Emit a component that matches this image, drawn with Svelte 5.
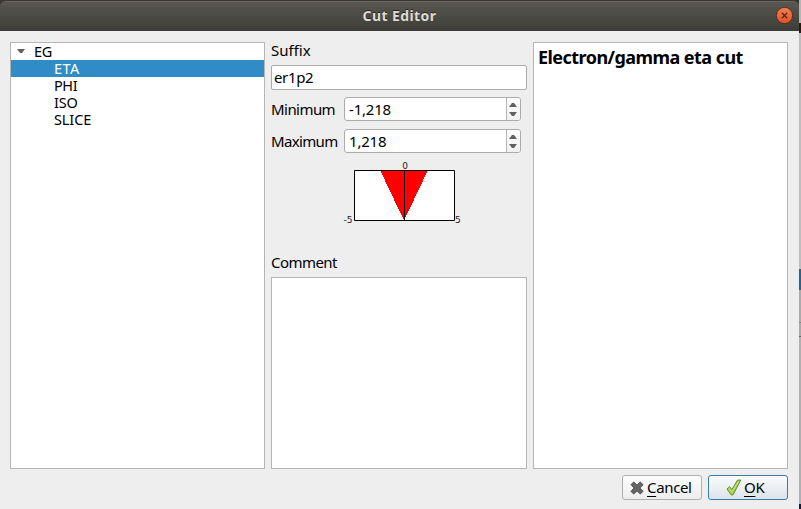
<script>
  let selected = $state('ETA');
  const cuts = ['ETA', 'PHI', 'ISO', 'SLICE'];
  const ranges = [
    { label: 'Minimum', value: '-1,218' },
    { label: 'Maximum', value: '1,218' }
  ];
  // Stepped edges of the selected range, one rectangle per pixel row
  const rows = Array.from({ length: 49 }, (_, i) => ({
    y: i + 1,
    half: Math.round(((49 - i) * 23.3) / 49)
  }));
</script>

<div class="screen">
  <div class="dialog">
    <header>
      <span class="title">Cut Editor</span>
      <button class="close" aria-label="Close">
        <svg width="17" height="17" viewBox="0 0 17 17">
          <defs>
            <linearGradient id="closeFill" x1="0" y1="0" x2="0" y2="1">
              <stop offset="0" stop-color="#f6804f" />
              <stop offset="1" stop-color="#e65024" />
            </linearGradient>
          </defs>
          <circle cx="8.5" cy="8.5" r="8.1" fill="url(#closeFill)" stroke="#37251c" stroke-width="0.7" />
          <path d="M5.8 5.8l5.4 5.4M11.2 5.8l-5.4 5.4" stroke="#55291a" stroke-width="1.3" />
        </svg>
      </button>
    </header>

    <main>
      <div class="panels">
        <div class="box tree">
          <div class="row root">
            <svg width="8" height="5" viewBox="0 0 8 5"><path d="M0 0h8L5 4H3z" fill="#606060" /></svg>
            <span>EG</span>
          </div>
          {#each cuts as cut}
            <button class="row child" class:selected={cut === selected} onclick={() => (selected = cut)}><span class={cut.toLowerCase()}>{cut}</span></button>
          {/each}
        </div>

        <div class="form">
          <div class="label suffix">Suffix</div>
          <div class="input">er1p2</div>
          {#each ranges as range}
            <div class="range">
              <span class="label {range.label.toLowerCase()}">{range.label}</span>
              <div class="spin">
                <span class="value">{range.value}</span>
                <span class="steps">
                  <svg width="14" height="23" viewBox="0 0 14 23">
                    <path d="M3 9L6 5h2l3 4zM3 14h8l-3 4H6z" fill="#606060" />
                  </svg>
                </span>
              </div>
            </div>
          {/each}
          <svg class="chart" width="140" height="70" viewBox="0 0 140 70">
            <rect x="24.5" y="11.5" width="100" height="50" fill="#fff" />
            <g fill="#f00" shape-rendering="crispEdges">
              {#each rows as r}
                <rect x={74 - r.half} y={r.y + 11} width={r.half * 2} height="1" />
              {/each}
            </g>
            <path d="M24.5 11.5h100v50h-100zM74.5 11.5v50" fill="none" stroke="#000" />
            <text x="75" y="10" text-anchor="middle">0</text>
            <text x="22.5" y="64" text-anchor="end">-5</text>
            <text x="125" y="64">5</text>
          </svg>
          <div class="label comment">Comment</div>
          <div class="box notes"></div>
        </div>

        <div class="box help"><h1>Electron/gamma eta cut</h1></div>
      </div>

      <footer>
        <button class="btn cancel">
          <svg width="14" height="14" viewBox="0 0 14 14">
            <path d="M3.7 1L7 4.2 10.3 1 13 3.7 9.8 7l3.2 3.3-2.7 2.7L7 9.8 3.7 13 1 10.3 4.2 7 1 3.7z" fill="#666" stroke="#484848" stroke-width="1" stroke-linejoin="round" />
          </svg>
          <span><u>C</u>ancel</span>
        </button>
        <button class="btn ok">
          <svg width="16" height="17" viewBox="0 0 16 17">
            <path d="M1 10L3.4 7.8l2.6 2.6L11.4 1.2 14.8 1 7 15.9H5.2z" fill="#a7d155" stroke="#5f922b" stroke-width="1" stroke-linejoin="round" />
            <path d="M2.8 9.6l3.2 3L12.8 2.2" fill="none" stroke="#c9e68b" stroke-width="0.9" />
          </svg>
          <span><u>O</u>K</span>
        </button>
      </footer>
    </main>
  </div>
  <div class="edge"></div>
</div>

<style>
  .screen {
    display: flex;
    width: 801px;
    height: 509px;
    overflow: hidden;
    background: #393733;
    font: 15px/17px "Noto Sans", "Open Sans", sans-serif;
    color: #000;
  }
  .dialog { display: flex; flex-direction: column; width: 799px; }
  .edge {
    width: 2px;
    background: linear-gradient(#b5b5b5 0 23px, #281a0d 23px 33px, #bebebe 33px 269px, #20659a 269px 290px, #ababab 290px 322px, #858585 322px 323px, #aaa 323px 336px, #666 336px 337px, #b0b0b0 337px 504px, #15183a 504px);
  }
  header {
    display: flex;
    align-items: center;
    justify-content: center;
    box-sizing: border-box;
    height: 30px;
    margin-top: 1px;
    padding: 0 0 3px;
    position: relative;
    border-top: 1px solid #6a675d;
    border-radius: 6px 6px 0 0;
    background: linear-gradient(#595750, #3d3c37);
  }
  .title {
    font-size: 14px;
    font-weight: 700;
    color: #dfdbd2;
    text-shadow: 0 -1px #25241f;
    white-space: nowrap;
    letter-spacing: 0.4px;
  }
  .close { position: absolute; right: 6px; top: 5px; display: block; padding: 0; border: 0; background: none; }
  .close svg { display: block; }
  main { flex: 1; padding: 11px 11px 9px 10px; background: #eee; }
  .panels { display: flex; gap: 6px; height: 427px; }
  .box { box-sizing: border-box; border: 1px solid #b5b5b5; background: #fff; }
  .tree { width: 255px; }
  .row {
    display: flex;
    align-items: center;
    box-sizing: border-box;
    width: 100%;
    height: 17px;
    border: 0;
    background: none;
    font: inherit;
    font-size: 14.5px;
    line-height: 17px;
    letter-spacing: -0.4px;
    color: #000;
  }
  .row span { line-height: 17px; }
  .eta { letter-spacing: 0.4px; }
  .iso { letter-spacing: -0.2px; }
  .slice { letter-spacing: -0.1px; }
  .root { padding-left: 6px; gap: 9px; }
  .child { padding: 0 0 0 43px; }
  .selected { background: #308cc6; color: #fff; }
  .form { display: flex; flex-direction: column; width: 256px; }
  .label { white-space: nowrap; }
  .suffix { height: 23px; letter-spacing: 0; }
  .input {
    box-sizing: border-box;
    height: 25px;
    padding: 3px 2px;
    border: 1px solid #ababab;
    border-radius: 2px;
    background: #fff;
    letter-spacing: -0.35px;
  }
  .range { display: flex; align-items: center; height: 24px; margin-top: 7px; }
  .range + .range { margin-top: 8px; }
  .range .label { width: 73px; }
  .range .minimum { letter-spacing: -0.55px; }
  .range .maximum { letter-spacing: -0.65px; }
  .spin {
    display: flex;
    box-sizing: border-box;
    width: 177px;
    height: 24px;
    border: 1px solid #ababab;
    border-radius: 3px;
    background: #fff;
    overflow: hidden;
  }
  .value { flex: 1; padding: 3px 4px; letter-spacing: -0.2px; }
  .steps { width: 13px; border-left: 1px solid #b5b5b5; background: linear-gradient(#fdfdfd, #f1f1f1); }
  .steps svg { display: block; margin-left: -1px; }
  .chart { display: block; margin: 6px 0 0 59px; flex: none; }
  .chart text { font: 9px "DejaVu Sans", sans-serif; fill: #222; }
  .comment { margin-top: 25px; height: 23px; letter-spacing: -0.55px; }
  .notes { flex: 1; }
  .help { width: 255px; padding: 3px 4px; }
  h1 { margin: 0; font-size: 18px; line-height: 22px; letter-spacing: -0.55px; white-space: nowrap; }
  footer { display: flex; justify-content: flex-end; gap: 6px; margin-top: 6px; }
  .btn {
    display: flex;
    align-items: center;
    box-sizing: border-box;
    width: 80px;
    height: 25px;
    padding: 0;
    border: 1px solid #b0b0b0;
    border-radius: 3px;
    background: linear-gradient(#fdfdfd, #ededed);
    font: inherit;
    letter-spacing: -0.35px;
    color: #000;
  }
  .cancel { padding-left: 7px; gap: 3px; }
  .ok { padding-left: 17px; gap: 2px; border-color: #397bab; background: linear-gradient(#fafcfd, #dce3e9); }
  u { text-underline-offset: 3px; text-decoration-thickness: 1px; }
</style>
